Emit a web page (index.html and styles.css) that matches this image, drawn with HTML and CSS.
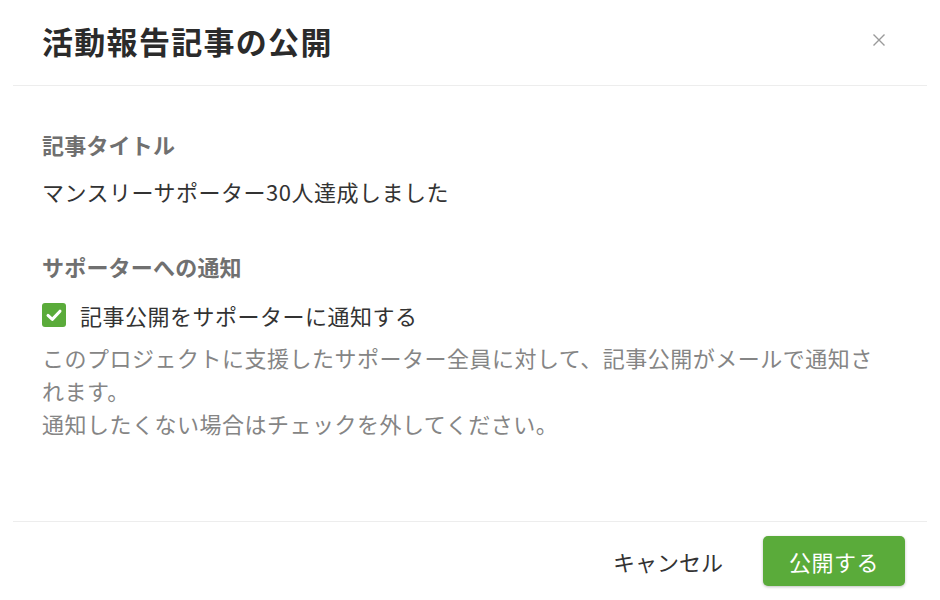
FILE: index.html
```html
<!DOCTYPE html>
<html lang="ja">
<head>
    <meta charset="UTF-8">
    <meta name="viewport" content="width=device-width, initial-scale=1.0">
    <title>活動報告記事の公開</title>
    <link rel="stylesheet" href="styles.css">
</head>
<body>
    <div class="modal">
        <div class="modal-header">
            <h1>活動報告記事の公開</h1>
            <button class="close-btn" aria-label="閉じる">
                <svg width="14" height="14" viewBox="0 0 14 14">
                    <path d="M1.5 1.5 L12.5 12.5 M12.5 1.5 L1.5 12.5" stroke="#9a9a9a" stroke-width="1.4" fill="none"/>
                </svg>
            </button>
        </div>

        <div class="modal-body">
            <div class="field-label">記事タイトル</div>
            <div class="field-value">マンスリーサポーター30人達成しました</div>

            <div class="field-label notify-label">サポーターへの通知</div>
            <label class="check-row">
                <span class="checkbox">
                    <svg width="24" height="24" viewBox="0 0 24 24">
                        <path d="M6 12.4 L10.3 16.4 L18 8.2" stroke="#fff" stroke-width="3" fill="none" stroke-linecap="round" stroke-linejoin="round"/>
                    </svg>
                </span>
                記事公開をサポーターに通知する
            </label>
            <p class="note">このプロジェクトに支援したサポーター全員に対して、記事公開がメールで通知されます。<br>通知したくない場合はチェックを外してください。</p>
        </div>

        <div class="modal-footer">
            <button class="cancel-btn">キャンセル</button>
            <button class="publish-btn">公開する</button>
        </div>
    </div>
</body>
</html>
```

FILE: styles.css
```css
body {
    margin: 0;
    font-family: "Noto Sans CJK JP", "Noto Sans", sans-serif;
    background-color: #fff;
    color: #333;
}
.modal {
    height: 600px;
    padding: 0 13px;
    display: flex;
    flex-direction: column;
}
.modal-header {
    height: 80px;
    padding: 0 29px 5px 29px;
    display: flex;
    align-items: center;
    justify-content: space-between;
    border-bottom: 1px solid #ededed;
}
h1 {
    margin: 0;
    font-size: 31px;
    font-weight: 700;
    letter-spacing: 1.3px;
    color: #2b2b2b;
}
.close-btn {
    background: none;
    border: none;
    padding: 0;
    margin-right: 12px;
    width: 14px;
    height: 14px;
    cursor: pointer;
}
.close-btn svg {
    display: block;
}
.modal-body {
    flex: 1;
    padding: 42px 44px 0 29px;
    font-size: 22px;
    letter-spacing: 0.5px;
}
.field-label {
    line-height: 32px;
    font-weight: 700;
    color: #707070;
    letter-spacing: 0.2px;
}
.field-value {
    margin-top: 15px;
    line-height: 32px;
    color: #333;
}
.notify-label {
    margin-top: 43px;
}
.check-row {
    margin-top: 17px;
    display: flex;
    align-items: center;
    line-height: 32px;
    color: #333;
    cursor: pointer;
}
.checkbox {
    width: 24px;
    height: 24px;
    margin-right: 14px;
    border-radius: 3px;
    background-color: #5aab3a;
    display: flex;
    align-items: center;
    justify-content: center;
}
.checkbox svg {
    display: block;
}
.note {
    margin: 10px 0 0 0;
    line-height: 33px;
    color: #858585;
}
.modal-footer {
    height: 78px;
    padding: 0 22px;
    border-top: 1px solid #ededed;
    display: flex;
    align-items: center;
    justify-content: flex-end;
    gap: 40px;
}
.cancel-btn {
    background: none;
    border: none;
    padding: 0;
    font-family: inherit;
    font-size: 22px;
    color: #333;
    cursor: pointer;
}
.publish-btn {
    width: 142px;
    height: 50px;
    border: none;
    border-radius: 5px;
    background-color: #5aab3a;
    color: #fff;
    font-family: inherit;
    font-size: 22px;
    letter-spacing: 0.5px;
    box-shadow: 0 1px 3px rgba(0, 0, 0, 0.25);
    cursor: pointer;
}
.publish-btn:hover {
    background-color: #4e9a31;
}
```
